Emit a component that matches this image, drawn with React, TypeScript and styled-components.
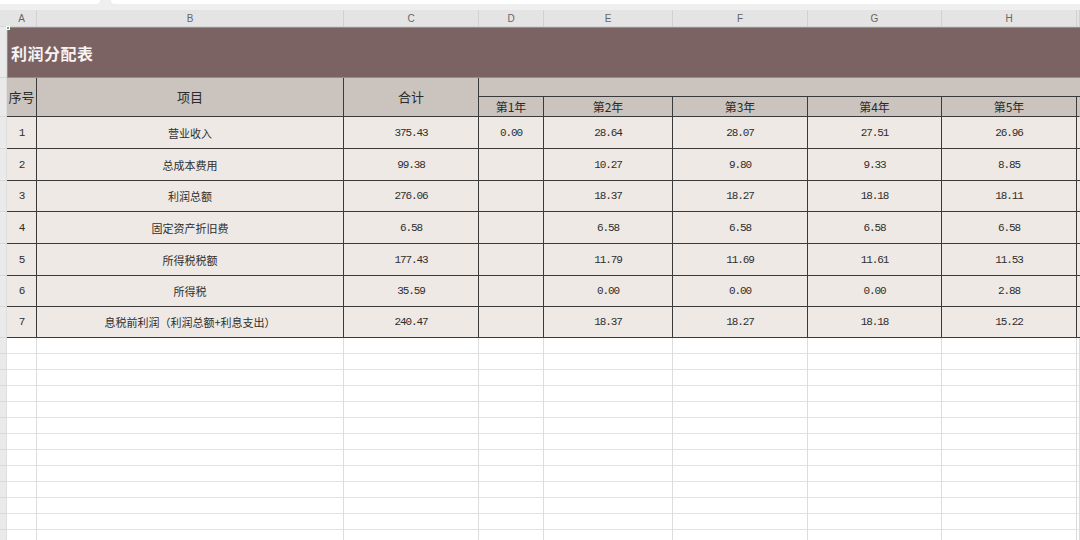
import React from "react";
import styled, { createGlobalStyle, css } from "styled-components";

const GlobalStyle = createGlobalStyle`
  html, body { margin: 0; padding: 0; background: #ffffff; }
  body { width: 1080px; height: 540px; overflow: hidden; font-family: "Noto Sans CJK SC", "Liberation Sans", sans-serif; }
  * { box-sizing: border-box; }
`;

const COLS = "7px 30px 307px 135px 65px 129px 135px 134px 135px 1fr";

const Page = styled.div`
  width: 1080px;
  height: 540px;
  display: flex;
  flex-direction: column;
  overflow: hidden;
`;

const TopBar = styled.div`
  height: 10px;
  flex: none;
  background: #efefef;
  display: flex;
  gap: 11px;
`;

const Tab = styled.div<{ $w?: string; $side: "l" | "r" }>`
  height: 4px;
  background: #ffffff;
  ${(p) => (p.$w ? css`width: ${p.$w};` : css`flex: 1;`)}
  border-radius: ${(p) => (p.$side === "l" ? "0 0 4px 0" : "0 0 0 4px")};
`;

const GridRow = styled.div<{ $h: number }>`
  display: grid;
  grid-template-columns: ${COLS};
  height: ${(p) => p.$h}px;
  flex: none;
`;

const ColHead = styled.div<{ $corner?: boolean }>`
  background: #e4e4e4;
  border-right: 1px solid ${(p) => (p.$corner ? "#e4e4e4" : "#d2d2d2")};
  border-bottom: 1px solid #d6d6d6;
  display: flex;
  align-items: center;
  justify-content: center;
  font-family: "Liberation Sans", Arial, sans-serif;
  font-size: 10px;
  color: #666;
`;

const RowStub = styled.div`
  background: #eaeaea;
  border-bottom: 1px solid #d9d9d9;
  border-right: 1px solid #dedede;
`;

const TitleCell = styled.div`
  grid-column: 2 / -1;
  background: #7b6263;
  border: 1.5px solid #36c27b;
  border-right: none;
  display: flex;
  align-items: center;
  padding-left: 3px;
  font-family: "Noto Sans CJK SC", sans-serif;
  font-weight: 700;
  font-size: 16px;
  color: #f7f3f3;
  letter-spacing: 0.5px;
  position: relative;
`;

const Handle = styled.span`
  position: absolute;
  left: -2px;
  top: -2px;
  width: 4px;
  height: 4px;
  background: #36c27b;
  border: 1px solid #ffffff;
`;

const HeaderBlock = styled.div`
  display: grid;
  grid-template-columns: ${COLS};
  grid-template-rows: 19px 20px;
  flex: none;
`;

const HeadStub = styled.div`
  grid-row: 1 / 3;
  background: #eaeaea;
  border-bottom: 1px solid #d9d9d9;
  border-right: 1px solid #dedede;
`;

const HeadCell = styled.div<{ $span?: boolean; $size?: number; $edge?: boolean }>`
  ${(p) => p.$span && css`grid-row: 1 / 3;`}
  background: #cbc4be;
  border-right: 1px solid ${(p) => (p.$edge ? "#cbc4be" : "#3a3a3a")};
  border-bottom: 1px solid #3a3a3a;
  display: flex;
  align-items: center;
  justify-content: center;
  font-size: ${(p) => p.$size || 13}px;
  color: #2a2a2a;
  padding-bottom: 1px;
`;

const YearTop = styled.div`
  grid-column: 5 / -1;
  background: #cbc4be;
  border-bottom: 1px solid #3a3a3a;
`;

const Cell = styled.div<{ $mono?: boolean }>`
  background: #eee9e4;
  border-right: 1px solid #3a3a3a;
  border-bottom: 1px solid #3a3a3a;
  display: flex;
  align-items: center;
  justify-content: center;
  color: #2e2e2e;
  ${(p) =>
    p.$mono
      ? css`
          font-family: "Liberation Mono", "DejaVu Sans Mono", monospace;
          font-size: 11px;
          letter-spacing: -1.1px;
        `
      : css`
          font-family: "Noto Sans CJK SC", sans-serif;
          font-size: 11px;
        `}
`;

const EdgeCell = styled.div`
  background: #eee9e4;
  border-bottom: 1px solid #3a3a3a;
`;

const EmptyCell = styled.div`
  border-right: 1px solid #dcdcdc;
  border-bottom: 1px solid #e2e2e2;
  background: #ffffff;
`;

const columns = ["A", "B", "C", "D", "E", "F", "G", "H", ""];

type RowData = { no: string; name: string; total: string; years: string[] };

const rows: RowData[] = [
  { no: "1", name: "营业收入", total: "375.43", years: ["0.00", "28.64", "28.07", "27.51", "26.96"] },
  { no: "2", name: "总成本费用", total: "99.38", years: ["", "10.27", "9.80", "9.33", "8.85"] },
  { no: "3", name: "利润总额", total: "276.06", years: ["", "18.37", "18.27", "18.18", "18.11"] },
  { no: "4", name: "固定资产折旧费", total: "6.58", years: ["", "6.58", "6.58", "6.58", "6.58"] },
  { no: "5", name: "所得税税额", total: "177.43", years: ["", "11.79", "11.69", "11.61", "11.53"] },
  { no: "6", name: "所得税", total: "35.59", years: ["", "0.00", "0.00", "0.00", "2.88"] },
  { no: "7", name: "息税前利润（利润总额+利息支出）", total: "240.47", years: ["", "18.37", "18.27", "18.18", "15.22"] },
];

const heights = [32, 32, 31, 32, 32, 31, 31];

export default function App() {
  return (
    <Page>
      <GlobalStyle />
      <TopBar>
        <Tab $w="100px" $side="l" />
        <Tab $side="r" />
      </TopBar>

      <GridRow $h={17}>
        <ColHead $corner />
        {columns.map((c, i) => (
          <ColHead key={i}>{c}</ColHead>
        ))}
      </GridRow>

      <GridRow $h={51}>
        <RowStub />
        <TitleCell>
          <Handle />
          利润分配表
        </TitleCell>
      </GridRow>

      <HeaderBlock>
        <HeadStub />
        <HeadCell $span>序号</HeadCell>
        <HeadCell $span>项目</HeadCell>
        <HeadCell $span>合计</HeadCell>
        <YearTop />
        {["第1年", "第2年", "第3年", "第4年", "第5年"].map((y) => (
          <HeadCell key={y} $size={12}>
            {y}
          </HeadCell>
        ))}
        <HeadCell $size={12} $edge />
      </HeaderBlock>

      {rows.map((r, i) => (
        <GridRow key={r.no} $h={heights[i]}>
          <RowStub />
          <Cell $mono>{r.no}</Cell>
          <Cell>{r.name}</Cell>
          <Cell $mono>{r.total}</Cell>
          {r.years.map((v, j) => (
            <Cell key={j} $mono>
              {v}
            </Cell>
          ))}
          <EdgeCell />
        </GridRow>
      ))}

      {Array.from({ length: 13 }).map((_, i) => (
        <GridRow key={`e${i}`} $h={16}>
          <RowStub />
          {columns.map((_, j) => (
            <EmptyCell key={j} />
          ))}
        </GridRow>
      ))}
    </Page>
  );
}
